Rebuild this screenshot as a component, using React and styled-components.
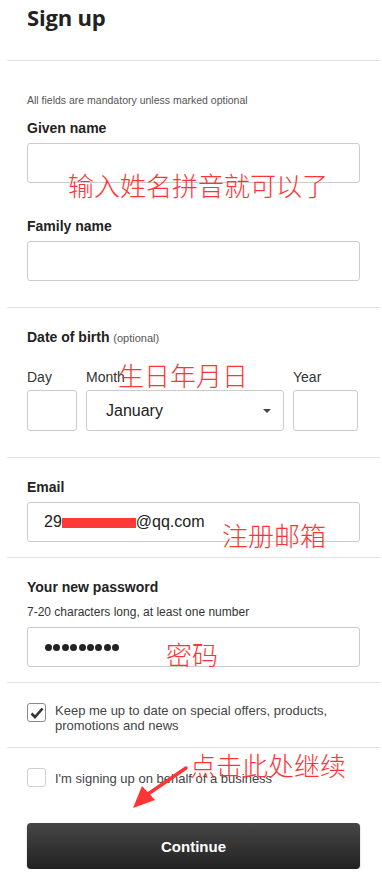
import React from "react";
import styled, { createGlobalStyle } from "styled-components";

const Global = createGlobalStyle`
  html, body { margin: 0; padding: 0; background: #fff; }
  body { font-family: "Liberation Sans", Arial, sans-serif; color: #222; }
  * { box-sizing: border-box; }
`;

const Page = styled.div`
  position: relative;
  width: 382px;
  padding-left: 7px;
  padding-right: 2px;
`;

const Header = styled.header`
  height: 61px;
  padding: 2px 0 0 20px;
  border-bottom: 1px solid #e2e2e2;
`;

const Title = styled.h1`
  margin: 0;
  font-family: "Open Sans", sans-serif;
  font-weight: 700;
  font-size: 22px;
  line-height: 30px;
  color: #222;
  letter-spacing: -0.2px;
`;

const Section = styled.section`
  padding: ${(p) => p.$pad || "20px 20px 15px"};
  border-bottom: ${(p) => (p.$last ? "none" : "1px solid #e2e2e2")};
`;

const Note = styled.p`
  margin: 0 0 12px;
  font-size: 10.5px;
  line-height: 14px;
  color: #555;
`;

const Label = styled.div`
  font-weight: 700;
  font-size: 14px;
  line-height: 18px;
  color: #222;
  margin-top: ${(p) => p.$mt || "0"};
`;

const Optional = styled.span`
  font-weight: 400;
  font-size: 11px;
  color: #555;
`;

const Hint = styled.div`
  margin-top: 8px;
  font-size: 12px;
  line-height: 16px;
  color: #333;
`;

const Input = styled.div`
  display: flex;
  align-items: center;
  width: ${(p) => p.$w || "100%"};
  height: ${(p) => p.$h || "40px"};
  margin-top: ${(p) => p.$mt || "6px"};
  padding: 0 16px;
  border: 1px solid #cccccc;
  border-radius: 3px;
  background: #fff;
  font-size: 16px;
  color: #222;
`;

const Redact = styled.span`
  display: inline-block;
  width: 74px;
  height: 10px;
  background: #ff3838;
  margin: 2px 0 0;
`;

const Dots = styled.div`
  display: flex;
  gap: 1.4px;
  padding-left: 1px;
`;

const Dot = styled.span`
  width: 7px;
  height: 7px;
  border-radius: 50%;
  background: #222;
`;

const DateRow = styled.div`
  display: grid;
  grid-template-columns: 50px 198px 65px;
  column-gap: 9px;
  margin-top: 21px;
`;

const DateCol = styled.div`
  display: flex;
  flex-direction: column;
`;

const SmallLabel = styled.div`
  font-size: 14px;
  line-height: 18px;
  color: #333;
`;

const Select = styled(Input)`
  justify-content: space-between;
  padding: 0 12px 0 19px;
`;

const Caret = styled.span`
  width: 0;
  height: 0;
  border-left: 4px solid transparent;
  border-right: 4px solid transparent;
  border-top: 4px solid #444;
`;

const CheckRow = styled.label`
  display: flex;
  align-items: flex-start;
  gap: 9px;
`;

const Box = styled.span`
  flex: none;
  width: 19px;
  height: 19px;
  margin-top: ${(p) => p.$mt || "0"};
  border: 1px solid ${(p) => (p.$checked ? "#8a8a8a" : "#cfcfcf")};
  border-radius: 3px;
  display: flex;
  align-items: center;
  justify-content: center;
  background: #fff;
`;

const CheckText = styled.span`
  font-size: 13px;
  line-height: 15px;
  color: #444;
  padding-top: ${(p) => p.$pt || "0"};
`;

const ButtonWrap = styled.div`
  padding: 36px 22px 0 20px;
`;

const Button = styled.button`
  width: 333px;
  height: 46px;
  border: none;
  border-radius: 4px;
  background: linear-gradient(#464646, #222222);
  color: #fff;
  font-family: "Liberation Sans", Arial, sans-serif;
  font-weight: 700;
  font-size: 15px;
  box-shadow: 0 1px 2px rgba(0,0,0,0.25);
`;

const Annot = styled.div`
  position: absolute;
  left: ${(p) => p.$x}px;
  top: ${(p) => p.$y}px;
  font-family: "Noto Sans CJK SC", sans-serif;
  font-weight: 300;
  font-size: 26px;
  line-height: 28px;
  color: #ff3434;
  white-space: nowrap;
  pointer-events: none;
`;

const Arrow = styled.svg`
  position: absolute;
  left: 128px;
  top: 764px;
  pointer-events: none;
`;

export default function App() {
  return (
    <>
      <Global />
      <Page>
        <Header>
          <Title>Sign up</Title>
        </Header>

        <Section $pad="32px 20px 26px">
          <Note>All fields are mandatory unless marked optional</Note>
          <Label>Given name</Label>
          <Input />
          <Label $mt="34px">Family name</Label>
          <Input />
        </Section>

        <Section $pad="20px 20px 26px">
          <Label>
            Date of birth <Optional>(optional)</Optional>
          </Label>
          <DateRow>
            <DateCol>
              <SmallLabel>Day</SmallLabel>
              <Input $h="41px" $mt="4px" />
            </DateCol>
            <DateCol>
              <SmallLabel>Month</SmallLabel>
              <Select $h="41px" $mt="4px">
                <span>January</span>
                <Caret />
              </Select>
            </DateCol>
            <DateCol>
              <SmallLabel>Year</SmallLabel>
              <Input $h="41px" $mt="4px" />
            </DateCol>
          </DateRow>
        </Section>

        <Section>
          <Label>Email</Label>
          <Input>
            29<Redact />@qq.com
          </Input>
        </Section>

        <Section>
          <Label>Your new password</Label>
          <Hint>7-20 characters long, at least one number</Hint>
          <Input $mt="7px">
            <Dots>
              {Array.from({ length: 9 }).map((_, i) => (
                <Dot key={i} />
              ))}
            </Dots>
          </Input>
        </Section>

        <Section $pad="20px 20px 14px">
          <CheckRow>
            <Box $checked>
              <svg width="14" height="12" viewBox="0 0 14 12">
                <path d="M1.5 6.5 L5 10 L12.5 1.5" fill="none" stroke="#333" strokeWidth="2.6" />
              </svg>
            </Box>
            <CheckText>
              Keep me up to date on special offers, products,
              <br />
              promotions and news
            </CheckText>
          </CheckRow>
        </Section>

        <Section $pad="20px 20px 0" $last>
          <CheckRow>
            <Box />
            <CheckText $pt="3px">I'm signing up on behalf of a business</CheckText>
          </CheckRow>
        </Section>

        <ButtonWrap>
          <Button>Continue</Button>
        </ButtonWrap>

        <Annot $x={68} $y={171}>输入姓名拼音就可以了</Annot>
        <Annot $x={118} $y={361}>生日年月日</Annot>
        <Annot $x={222} $y={521}>注册邮箱</Annot>
        <Annot $x={166} $y={640}>密码</Annot>
        <Annot $x={190} $y={751}>点击此处继续</Annot>
        <Arrow width="64" height="50" viewBox="0 0 64 50">
          <path d="M58 4 L20 30" stroke="#ff3434" strokeWidth="3.5" strokeLinecap="round" />
          <path d="M5 44 L14 22 L27 36 Z" fill="#ff3434" />
        </Arrow>
      </Page>
    </>
  );
}
